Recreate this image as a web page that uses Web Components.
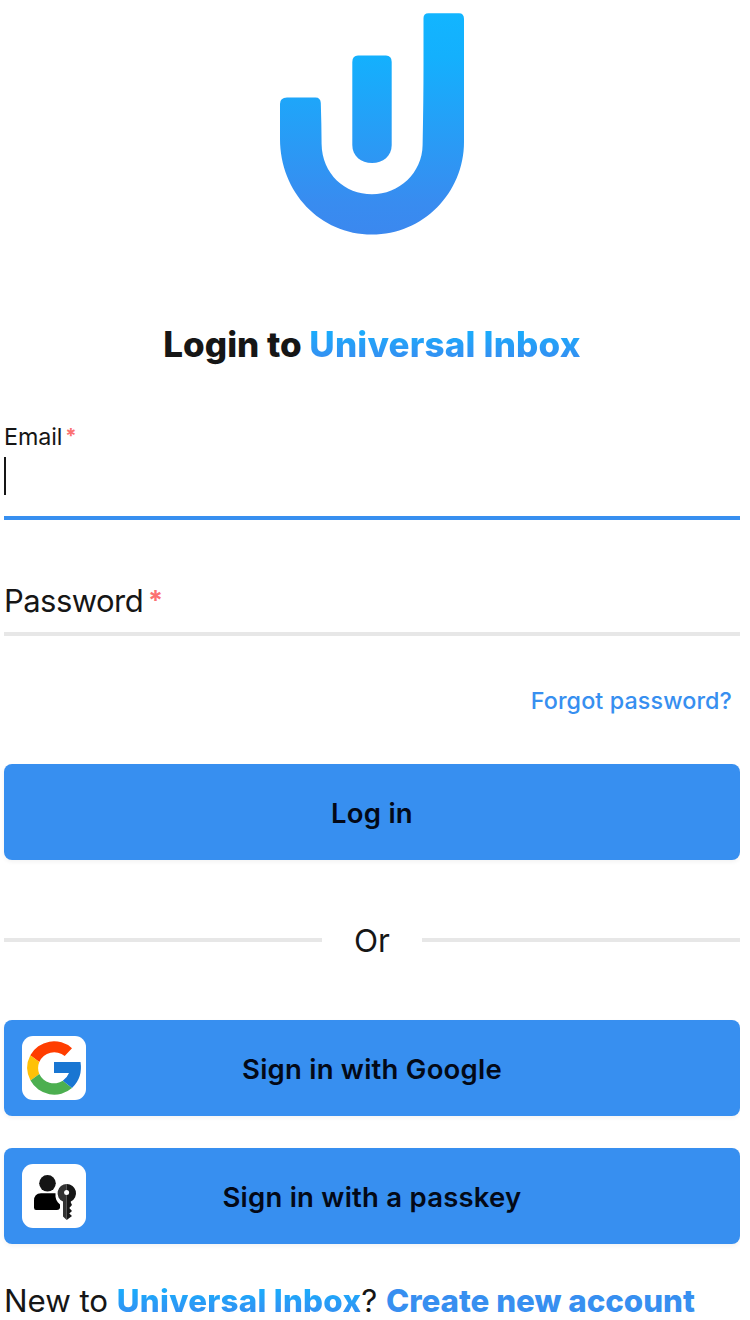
<!DOCTYPE html>
<html lang="en">
<head>
<meta charset="utf-8">
<title>Login - Universal Inbox</title>
<style>
body { margin: 0; background: #fff; color: #161616; font-family: Inter, "Liberation Sans", sans-serif; }
</style>
</head>
<body>
<login-page></login-page>
<script>
function define(name, html) {
  const template = document.createElement('template');
  template.innerHTML = html;
  customElements.define(name, class extends HTMLElement {
    constructor() {
      super();
      this.attachShadow({ mode: 'open' }).append(template.content.cloneNode(true));
    }
  });
}

define('ui-logo', `
<style>:host{display:block;height:324px} svg{display:block;margin:0 auto}</style>
<svg width="204" height="250" viewBox="270 0 204 250">
  <defs><linearGradient id="g" gradientUnits="userSpaceOnUse" x1="0" y1="13" x2="0" y2="235">
    <stop offset="0" stop-color="#12b5ff"/><stop offset=".2" stop-color="#14b0fd"/><stop offset=".85" stop-color="#388cf0"/><stop offset="1" stop-color="#3b88ef"/>
  </linearGradient></defs>
  <path fill="url(#g)" d="M287 97.5H315.500Q320.500 97.500 320.800 103Q321.500 125 321.600 144C322 174 345 194.300 372 194.300C399 194.300 422.300 173 422.600 145Q423.500 100 423.500 65V18Q423.500 13.200 428.500 13.200H459Q464 13.200 464 19V142C464 193 423 234.600 372 234.600C320 234.600 280 192 280 139V104Q280 97.500 287 97.500Z"/>
  <path fill="url(#g)" d="M358 55.500H386Q391.700 55.500 391.700 62V145C391.700 156 383 163 372 163C361 163 352.300 156 352.300 145V62Q352.300 55.500 358 55.500Z"/>
</svg>`);

define('brand-name', `
<style>:host{display:inline;font-weight:800} span{background:linear-gradient(#12b5ff,#3b88ef);-webkit-background-clip:text;background-clip:text;color:transparent}</style>
<span><slot></slot></span>`);

define('page-heading', `
<style>:host{display:block} h1{margin:0;font:800 35px/40px Inter,sans-serif;letter-spacing:0;text-align:center;white-space:nowrap} ::slotted(brand-name){letter-spacing:.17px}</style>
<h1><slot></slot></h1>`);

define('form-field', `
<style>
:host{display:block;box-sizing:border-box;border-bottom:4px solid #e7e7e7}
.label{display:flex;gap:5px;font-size:31px;line-height:40px;letter-spacing:-.55px}
.star{color:#fb7171;font-weight:700;font-size:.87em;position:relative;top:0}
.caret{display:none;width:2px;height:38px;background:#161616}
:host([active]){border-color:#378ff0}
:host([active]) .label{font-size:23.3px;line-height:32px;margin-bottom:4px;letter-spacing:-.1px;gap:3px}
:host([active]) .star{top:-1px}
:host([active]) .caret{display:block}
</style>
<div class="label"><slot></slot><span class="star">*</span></div><div class="caret"></div>`);

define('forgot-link', `
<style>:host{display:block;text-align:right;color:#378ff0;font-size:23.3px;font-weight:500;line-height:32px;padding-right:8px;letter-spacing:.12px}</style>
<slot></slot>`);

define('action-button', `
<style>
:host{display:grid;grid-template-columns:64px 1fr 64px;align-items:center;box-sizing:border-box;height:96px;padding:0 18px;border-radius:8px;background:#378ff0;color:#030917;box-shadow:0 2px 4px #0000000d}
.text{grid-column:2;grid-row:1;font-size:27.5px;line-height:36px;padding-top:2px;font-weight:600;letter-spacing:.23px;text-align:center;white-space:nowrap}
::slotted(icon-tile){grid-column:1}
</style>
<slot name="icon"></slot><span class="text"><slot></slot></span>`);

define('icon-tile', `
<style>:host{display:block;width:64px;height:64px;border-radius:11px;background:#fff;overflow:hidden}</style>
<slot></slot>`);

define('google-icon', `
<style>:host,svg{display:block}</style>
<svg width="64" height="64" viewBox="0 0 64 64">
  <path fill="#ff3d00" d="M8.300 19.300A27 27 0 0 1 50 12.200L42.700 20A16.300 16.300 0 0 0 17.300 26Z"/>
  <path fill="#ffc107" d="M8.300 19.300L17.300 26A16 16 0 0 0 17.300 38L8.500 44.500A27 27 0 0 1 8.300 19.300Z"/>
  <path fill="#4caf50" d="M8.500 44.500L17.300 38A16.300 16.300 0 0 0 40.800 44.800L50 52A27 27 0 0 1 8.500 44.500Z"/>
  <path fill="#1976d2" d="M32 26H58.500Q61 41.500 50 52L40.800 44.800Q45.200 41.500 47 37H32Z"/>
</svg>`);

define('passkey-icon', `
<style>:host,svg{display:block}</style>
<svg width="64" height="64" viewBox="0 0 64 64">
  <circle cx="25.500" cy="19.300" r="8.300" fill="#141414"/>
  <path d="M19 29.300H33.500C33 34 34.500 38 38 40.500V44Q37.500 46 35 46H14Q12 46 12 43.500V37Q12 29.300 19 29.300Z"/>
  <path fill="#333" d="M44.700 20A9.200 9.200 0 0 0 41 37.600V52.500L44.700 56Z"/>
  <path fill="#161616" d="M44.700 20A9.200 9.200 0 0 1 48.800 37.500V38.500L50 41L47.300 44L50 47L47.300 49.500L50 52L44.700 56Z"/>
  <circle cx="44.600" cy="28.500" r="2.500" fill="#fff"/>
</svg>`);

define('or-divider', `
<style>:host{display:flex;align-items:center;height:40px;gap:32px;font-size:31.500px;line-height:40px}
i{flex:1;height:4px;background:#e7e7e7} span{width:36px;display:flex;justify-content:center;padding-top:2px}</style>
<i></i><span><slot></slot></span><i></i>`);

define('signup-line', `
<style>:host{display:block;font-size:31.300px;line-height:40px;white-space:nowrap;letter-spacing:-.05px}
a{font-weight:800;color:#378ff0;letter-spacing:-.02px} brand-name{letter-spacing:.27px}</style>
New to <brand-name>Universal Inbox</brand-name>? <a>Create new account</a>`);

define('login-page', `
<style>
:host{display:block;width:736px;height:1320px;padding-left:4px;overflow:hidden}
page-heading{margin-bottom:57px}
.email{height:99px;margin-bottom:61px}
.password{height:55px;margin-bottom:49px}
forgot-link{margin-bottom:47px}
or-divider{margin:60px 0}
.google{margin-bottom:32px}
signup-line{margin-top:37px}
</style>
<ui-logo></ui-logo>
<page-heading>Login to <brand-name>Universal Inbox</brand-name></page-heading>
<form-field class="email" active>Email</form-field>
<form-field class="password">Password</form-field>
<forgot-link>Forgot password?</forgot-link>
<action-button>Log in</action-button>
<or-divider>Or</or-divider>
<action-button class="google"><icon-tile slot="icon"><google-icon></google-icon></icon-tile>Sign in with Google</action-button>
<action-button><icon-tile slot="icon"><passkey-icon></passkey-icon></icon-tile>Sign in with a passkey</action-button>
<signup-line></signup-line>`);
</script>
</body>
</html>
